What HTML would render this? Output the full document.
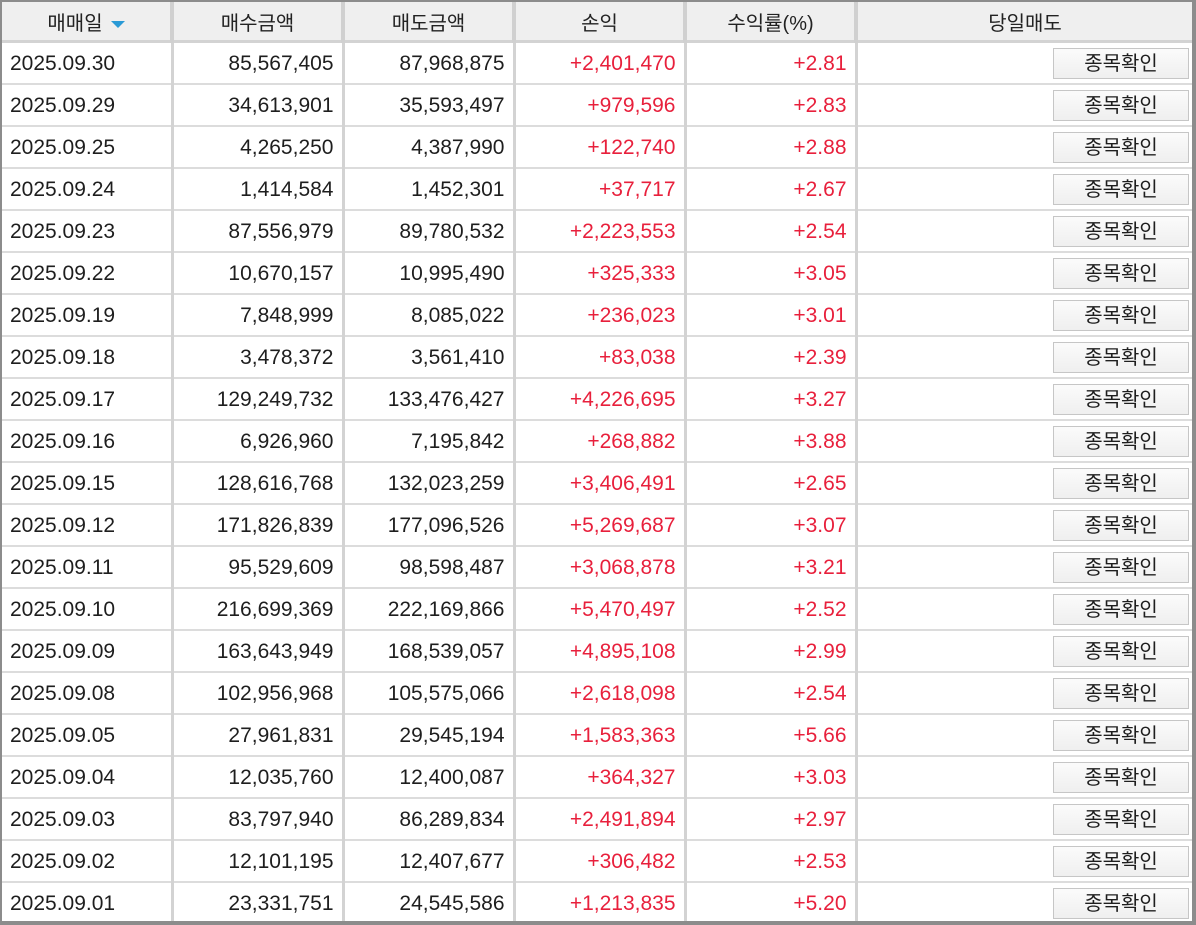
<!DOCTYPE html>
<html><head><meta charset="utf-8"><style>
html,body{margin:0;padding:0;background:#fff;}
.wrap{position:absolute;left:0;top:0;border-left:2px solid #8c8c8c;border-top:2px solid #8c8c8c;border-right:4px solid #8c8c8c;border-bottom:4px solid #8c8c8c;overflow:hidden;box-sizing:content-box;width:1190px;height:919px;}
table{border-collapse:collapse;table-layout:fixed;font-family:"Liberation Sans","Noto Sans CJK KR",sans-serif;font-size:21px;color:#1e1e1e;}
td,th{padding:0;border-right:3px solid #d3d3d3;border-bottom:2px solid #dcdcdc;height:40px;overflow:hidden;white-space:nowrap;}
td{padding-top:2px;height:38px;}
th{background:#efefef;font-weight:normal;height:38px;border-bottom:3px solid #d3d3d3;border-right:4px solid #d0d0d0;color:#222;font-size:20px;}
tr:last-child td{border-bottom:none;}
td:last-child,th:last-child{border-right:none;}
td.d{padding-left:8px;text-align:left;}
td.n{text-align:right;padding-right:8px;}
td.r{text-align:right;padding-right:8px;color:#e8203c;}
td.b{text-align:right;padding-right:3px;padding-top:0;height:40px;}
.btn{display:inline-block;box-sizing:border-box;width:136px;height:31px;line-height:31px;border:1px solid #c6c6c6;background:linear-gradient(#fbfbfb,#efefef);text-align:center;font-size:20px;color:#1e1e1e;vertical-align:middle;}
.tri{display:inline-block;width:0;height:0;border-left:7px solid transparent;border-right:7px solid transparent;border-top:7px solid #2a9ad6;margin-left:8px;vertical-align:middle;}
</style></head><body><div class="wrap"><table>
<colgroup><col style="width:170px"><col style="width:171px"><col style="width:171px"><col style="width:171px"><col style="width:171px"><col style="width:336px"></colgroup>
<tr><th>매매일<span class="tri"></span></th><th>매수금액</th><th>매도금액</th><th>손익</th><th>수익률(%)</th><th>당일매도</th></tr>
<tr><td class="d">2025.09.30</td><td class="n">85,567,405</td><td class="n">87,968,875</td><td class="r">+2,401,470</td><td class="r">+2.81</td><td class="b"><span class="btn">종목확인</span></td></tr>
<tr><td class="d">2025.09.29</td><td class="n">34,613,901</td><td class="n">35,593,497</td><td class="r">+979,596</td><td class="r">+2.83</td><td class="b"><span class="btn">종목확인</span></td></tr>
<tr><td class="d">2025.09.25</td><td class="n">4,265,250</td><td class="n">4,387,990</td><td class="r">+122,740</td><td class="r">+2.88</td><td class="b"><span class="btn">종목확인</span></td></tr>
<tr><td class="d">2025.09.24</td><td class="n">1,414,584</td><td class="n">1,452,301</td><td class="r">+37,717</td><td class="r">+2.67</td><td class="b"><span class="btn">종목확인</span></td></tr>
<tr><td class="d">2025.09.23</td><td class="n">87,556,979</td><td class="n">89,780,532</td><td class="r">+2,223,553</td><td class="r">+2.54</td><td class="b"><span class="btn">종목확인</span></td></tr>
<tr><td class="d">2025.09.22</td><td class="n">10,670,157</td><td class="n">10,995,490</td><td class="r">+325,333</td><td class="r">+3.05</td><td class="b"><span class="btn">종목확인</span></td></tr>
<tr><td class="d">2025.09.19</td><td class="n">7,848,999</td><td class="n">8,085,022</td><td class="r">+236,023</td><td class="r">+3.01</td><td class="b"><span class="btn">종목확인</span></td></tr>
<tr><td class="d">2025.09.18</td><td class="n">3,478,372</td><td class="n">3,561,410</td><td class="r">+83,038</td><td class="r">+2.39</td><td class="b"><span class="btn">종목확인</span></td></tr>
<tr><td class="d">2025.09.17</td><td class="n">129,249,732</td><td class="n">133,476,427</td><td class="r">+4,226,695</td><td class="r">+3.27</td><td class="b"><span class="btn">종목확인</span></td></tr>
<tr><td class="d">2025.09.16</td><td class="n">6,926,960</td><td class="n">7,195,842</td><td class="r">+268,882</td><td class="r">+3.88</td><td class="b"><span class="btn">종목확인</span></td></tr>
<tr><td class="d">2025.09.15</td><td class="n">128,616,768</td><td class="n">132,023,259</td><td class="r">+3,406,491</td><td class="r">+2.65</td><td class="b"><span class="btn">종목확인</span></td></tr>
<tr><td class="d">2025.09.12</td><td class="n">171,826,839</td><td class="n">177,096,526</td><td class="r">+5,269,687</td><td class="r">+3.07</td><td class="b"><span class="btn">종목확인</span></td></tr>
<tr><td class="d">2025.09.11</td><td class="n">95,529,609</td><td class="n">98,598,487</td><td class="r">+3,068,878</td><td class="r">+3.21</td><td class="b"><span class="btn">종목확인</span></td></tr>
<tr><td class="d">2025.09.10</td><td class="n">216,699,369</td><td class="n">222,169,866</td><td class="r">+5,470,497</td><td class="r">+2.52</td><td class="b"><span class="btn">종목확인</span></td></tr>
<tr><td class="d">2025.09.09</td><td class="n">163,643,949</td><td class="n">168,539,057</td><td class="r">+4,895,108</td><td class="r">+2.99</td><td class="b"><span class="btn">종목확인</span></td></tr>
<tr><td class="d">2025.09.08</td><td class="n">102,956,968</td><td class="n">105,575,066</td><td class="r">+2,618,098</td><td class="r">+2.54</td><td class="b"><span class="btn">종목확인</span></td></tr>
<tr><td class="d">2025.09.05</td><td class="n">27,961,831</td><td class="n">29,545,194</td><td class="r">+1,583,363</td><td class="r">+5.66</td><td class="b"><span class="btn">종목확인</span></td></tr>
<tr><td class="d">2025.09.04</td><td class="n">12,035,760</td><td class="n">12,400,087</td><td class="r">+364,327</td><td class="r">+3.03</td><td class="b"><span class="btn">종목확인</span></td></tr>
<tr><td class="d">2025.09.03</td><td class="n">83,797,940</td><td class="n">86,289,834</td><td class="r">+2,491,894</td><td class="r">+2.97</td><td class="b"><span class="btn">종목확인</span></td></tr>
<tr><td class="d">2025.09.02</td><td class="n">12,101,195</td><td class="n">12,407,677</td><td class="r">+306,482</td><td class="r">+2.53</td><td class="b"><span class="btn">종목확인</span></td></tr>
<tr><td class="d">2025.09.01</td><td class="n">23,331,751</td><td class="n">24,545,586</td><td class="r">+1,213,835</td><td class="r">+5.20</td><td class="b"><span class="btn">종목확인</span></td></tr>
</table></div></body></html>
